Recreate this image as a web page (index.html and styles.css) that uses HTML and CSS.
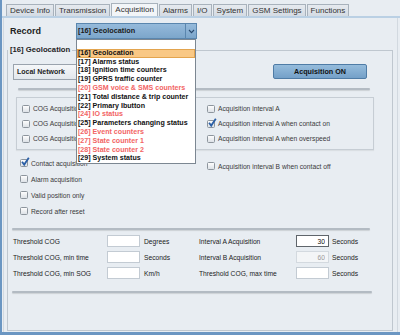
FILE: index.html
```html
<!DOCTYPE html>
<html lang="en">

<head>
    <meta charset="UTF-8">
    <title>Acquisition</title>
    <link rel="stylesheet" href="styles.css">
</head>

<body>
    <div class="window">
        <!-- Pestañas -->
        <div class="tabs">
            <div class="tab">Device Info</div>
            <div class="tab">Transmission</div>
            <div class="tab active">Acquisition</div>
            <div class="tab">Alarms</div>
            <div class="tab">I/O</div>
            <div class="tab">System</div>
            <div class="tab">GSM Settings</div>
            <div class="tab">Functions</div>
        </div>

        <div class="panel">
            <div class="record-row">
                <span class="record-label">Record</span>
                <div class="combo">
                    <span class="combo-value">[16] Geolocation</span>
                    <span class="combo-arrow">
                        <svg width="7" height="5" viewBox="0 0 7 5"><path d="M1 1 L3.5 3.6 L6 1" stroke="#28496e" stroke-width="1.1" fill="none"/></svg>
                    </span>
                    <ul class="combo-list">
                        <li></li>
                        <li class="sel">[16] Geolocation</li>
                        <li>[17] Alarms status</li>
                        <li>[18] Ignition time counters</li>
                        <li>[19] GPRS traffic counter</li>
                        <li class="off">[20] GSM voice &amp; SMS counters</li>
                        <li>[21] Total distance &amp; trip counter</li>
                        <li>[22] Primary Ibutton</li>
                        <li class="off">[24] IO status</li>
                        <li>[25] Parameters changing status</li>
                        <li class="off">[26] Event counters</li>
                        <li class="off">[27] State counter 1</li>
                        <li class="off">[28] State counter 2</li>
                        <li>[29] System status</li>
                    </ul>
                </div>
            </div>

            <fieldset class="group">
                <legend>[16] Geolocation</legend>

                <div class="group-top">
                    <div class="network">Local Network</div>
                    <button class="acq-btn">Acquisition ON</button>
                </div>

                <div class="sep sep-top"></div>

                <div class="cog-box">
                    <div class="col">
                        <div class="cb-row"><span class="cb"></span>COG Acquisition</div>
                        <div class="cb-row"><span class="cb"></span>COG Acquisition min time</div>
                        <div class="cb-row"><span class="cb"></span>COG Acquisition min SOG</div>
                    </div>
                    <div class="col">
                        <div class="cb-row"><span class="cb"></span>Acquisition interval A</div>
                        <div class="cb-row"><span class="cb checked"><svg viewBox="0 0 10 10"><path d="M2 4.8 L4.2 7.6 L8.8 0.8" stroke="#2b5fa6" stroke-width="1.8" fill="none"/></svg></span>Acquisition interval A when contact on</div>
                        <div class="cb-row"><span class="cb"></span>Acquisition interval A when overspeed</div>
                    </div>
                </div>

                <div class="options">
                    <div class="col">
                        <div class="cb-row tall"><span class="cb checked"><svg viewBox="0 0 10 10"><path d="M2 4.8 L4.2 7.6 L8.8 0.8" stroke="#2b5fa6" stroke-width="1.8" fill="none"/></svg></span>Contact acquisition</div>
                        <div class="cb-row tall"><span class="cb"></span>Alarm acquisition</div>
                        <div class="cb-row tall"><span class="cb"></span>Valid position only</div>
                        <div class="cb-row tall"><span class="cb"></span>Record after reset</div>
                    </div>
                    <div class="col col-b">
                        <div class="cb-row tall"><span class="cb"></span>Acquisition interval B when contact off</div>
                    </div>
                </div>

                <div class="sep"></div>

                <div class="thresholds">
                    <span>Threshold COG</span>
                    <input type="text" class="field">
                    <span class="unit">Degrees</span>
                    <span>Interval A Acquisition</span>
                    <input type="text" class="field focus" value="30">
                    <span class="unit unit-r">Seconds</span>

                    <span>Threshold COG, min time</span>
                    <input type="text" class="field">
                    <span class="unit">Seconds</span>
                    <span>Interval B Acquisition</span>
                    <input type="text" class="field" value="60" disabled>
                    <span class="unit unit-r">Seconds</span>

                    <span>Threshold COG, min SOG</span>
                    <input type="text" class="field">
                    <span class="unit">Km/h</span>
                    <span>Threshold COG, max time</span>
                    <input type="text" class="field">
                    <span class="unit unit-r">Seconds</span>
                </div>

                <div class="sep"></div>
            </fieldset>
        </div>
    </div>
</body>

</html>
```

FILE: styles.css
```css
* {
    box-sizing: border-box;
}

body {
    margin: 0;
    font-family: "Liberation Sans", Arial, sans-serif;
}

.window {
    width: 400px;
    height: 335px;
    background: #e8edf2;
    border-left: 2px solid #6b96c2;
    border-bottom: 3px solid #6b96c2;
    display: flex;
    flex-direction: column;
    overflow: hidden;
}

/* Pestañas */
.tabs {
    display: flex;
    align-items: flex-end;
    height: 18px;
    padding-left: 4px;
    border-bottom: 2px solid #bad0e4;
}

.tab {
    height: 12px;
    padding: 0 3px;
    margin-right: 1px;
    border: 1px solid #a8b2bc;
    border-bottom: none;
    background: linear-gradient(#e6eaef, #d4dbe3);
    font-size: 8px;
    line-height: 11px;
    color: #333;
}

.tab.active {
    height: 13px;
    line-height: 12px;
    background: #f2f5f8;
}

.panel {
    flex: 1;
    margin: 0 2px 0 1px;
    padding: 5px 0 0 3px;
    border: 1px solid #d2d9e0;
    border-top: none;
    border-bottom: none;
    display: flex;
    flex-direction: column;
}

/* Selector de registro */
.record-row {
    display: flex;
    align-items: center;
    height: 16px;
    padding-left: 3px;
}

.record-label {
    width: 66px;
    font-size: 9px;
    font-weight: bold;
    color: #222;
}

.combo {
    position: relative;
    width: 121px;
    height: 16px;
    border: 1px solid #5a86ae;
    background: linear-gradient(#95badb, #7ca6cb);
    display: flex;
}

.combo-value {
    flex: 1;
    padding-left: 1px;
    font-size: 7.3px;
    font-weight: bold;
    line-height: 14px;
    color: #1b1b1b;
}

.combo-arrow {
    width: 11px;
    border-left: 1px solid #5a86ae;
    display: flex;
    align-items: center;
    justify-content: center;
}

.combo-list {
    position: absolute;
    top: 15px;
    left: -1px;
    width: 120px;
    margin: 0;
    padding: 0;
    list-style: none;
    border: 1px solid #7c8792;
    background: #fff;
    font-size: 7.1px;
    font-weight: bold;
    z-index: 5;
}

.combo-list li {
    height: 8.8px;
    line-height: 8.8px;
    padding-left: 1px;
    color: #111;
    white-space: nowrap;
}

.combo-list li.sel {
    background: #f9c885;
    box-shadow: inset 0 0 0 1px #e3a44e;
}

.combo-list li.off {
    color: #f26464;
}

/* Grupo */
.group {
    margin: 6px 4px 0 0;
    padding: 9px 0 37px;
    border: 1px solid #bfc7cf;
    min-width: 0;
}

.group legend {
    padding: 0 2px;
    font-size: 7.7px;
    font-weight: bold;
    line-height: 10px;
    color: #1e1e1e;
}

.group-top {
    display: flex;
    justify-content: space-between;
    align-items: flex-start;
    height: 16px;
    padding: 0 25px 0 5px;
}

.network {
    width: 150px;
    height: 16px;
    padding-left: 3px;
    border: 1px solid #9aa3ad;
    background: linear-gradient(#f5f7f9, #e2e7ec);
    font-size: 7px;
    font-weight: bold;
    line-height: 14px;
    color: #1e1e1e;
}

.acq-btn {
    width: 94px;
    height: 15px;
    padding: 0;
    border: 1px solid #4f7ca6;
    border-radius: 2px;
    background: linear-gradient(#95bcdc, #74a0c8);
    font-family: "Liberation Sans", Arial, sans-serif;
    font-size: 7.2px;
    font-weight: bold;
    color: #111;
}

.sep {
    height: 2px;
    margin: 9px 22px 0 4px;
    background: #b3bbc3;
    border-radius: 1px;
    box-shadow: 0 1px 1px rgba(0, 0, 0, 0.12);
}

.sep-top {
    margin: 8px 22px 0 10px;
}

.group .thresholds + .sep {
    margin-top: 10px;
    margin-right: 20px;
}

/* Casillas */
.cog-box {
    display: grid;
    grid-template-columns: 185px 1fr;
    margin: 7px 18px 0 8px;
    padding: 3px 0 3px 5px;
    border: 1px solid #c6cdd4;
    box-shadow: 0 1px 1px rgba(0, 0, 0, 0.06);
}

.options {
    display: grid;
    grid-template-columns: 187px 1fr;
    margin: 5px 0 0 12px;
}

.col-b {
    padding-top: 3px;
}

.col {
    min-width: 0;
    overflow: hidden;
}

.cb-row {
    display: flex;
    align-items: center;
    gap: 3px;
    height: 15px;
    font-size: 6.7px;
    color: #3a3a3a;
    white-space: nowrap;
}

.cb-row.tall {
    height: 16px;
}

.cb {
    position: relative;
    flex: none;
    width: 8px;
    height: 8px;
    border: 1px solid #8d959d;
    border-radius: 1.5px;
    background: linear-gradient(#fdfdfd, #dde2e7);
}

.cb svg {
    position: absolute;
    left: -1px;
    top: -3px;
    width: 10px;
    height: 10px;
}

/* Umbrales */
.thresholds {
    display: grid;
    grid-template-columns: 94px 33px 59px 97px 33px 1fr;
    grid-auto-rows: 16px;
    align-items: center;
    margin: 3px 0 0 5px;
    font-size: 6.7px;
    color: #222;
    white-space: nowrap;
}

.field {
    width: 33px;
    height: 12px;
    margin: 0;
    padding: 0 3px 0 0;
    border: 1px solid #c3cbd3;
    background: #fff;
    font-family: "Liberation Sans", Arial, sans-serif;
    font-size: 6.7px;
    text-align: right;
    color: #111;
}

.field.focus {
    border-color: #5f656b;
}

.field:disabled {
    background: #f3f5f7;
    border-color: #d3d9df;
    color: #9a9a9a;
}

.unit {
    padding-left: 4px;
}

.unit-r {
    padding-left: 3px;
}
```
